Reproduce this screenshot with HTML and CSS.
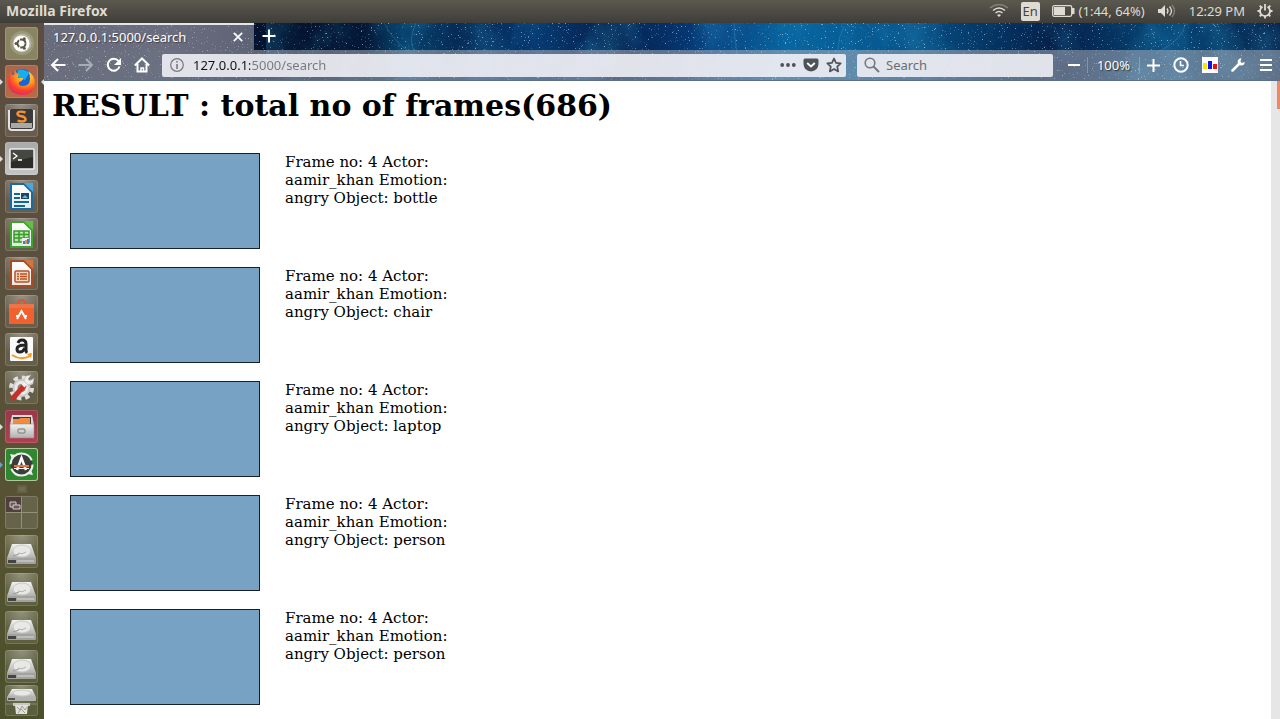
FILE: index.html
```html
<!DOCTYPE html>
<html lang="en">
<head>
<meta charset="utf-8">
<title>127.0.0.1:5000/search</title>
<link rel="stylesheet" href="styles.css">
</head>
<body>
<svg class="defs" aria-hidden="true">
  <defs>
    <linearGradient id="paper" x2="0" y2="1"><stop stop-color="#fff"/><stop offset="1" stop-color="#e4e8e6"/></linearGradient>
    <linearGradient id="metal" x2="0" y2="1"><stop stop-color="#f2f2f0"/><stop offset="1" stop-color="#b0b0ae"/></linearGradient>
    <radialGradient id="flame" cx=".65" cy=".2" r=".9"><stop stop-color="#ffe84a"/><stop offset=".4" stop-color="#ff9a1c"/><stop offset=".7" stop-color="#f8402e"/><stop offset="1" stop-color="#e0207a"/></radialGradient>
    <symbol id="drive" viewBox="0 0 33 33">
      <path d="M7 9h19l5 14H2z" fill="url(#metal)"/>
      <path d="M2 23h29v5q0 1-1 1H3q-1 0-1-1z" fill="#a2a29e"/>
      <path d="M3 25h8v3H3z" fill="#444"/><path d="M12 26h17" stroke="#d8d8d4"/>
      <ellipse cx="17" cy="16" rx="9" ry="6" fill="#e8e8e6" stroke="#c8c8c4"/>
      <path d="M13 18q4 2 8-1" fill="none" stroke="#b4b4b0"/>
      <path d="M8 21l6-2" stroke="#999"/>
    </symbol>
  </defs>
</svg>

<header class="panel">
  <span class="panel-title">Mozilla Firefox</span>
  <div class="indicators">
    <svg class="wifi" width="20" height="14" viewBox="0 0 20 14" fill="none" stroke="#dfdbd2" stroke-width="1.5"><path d="M1 4q9-7 18 0" stroke="#85827a"/><path d="M4 6.500q6-5 12 0M6.500 9q3.500-3 7 0"/><path d="M8 11l2 2 2-2q-2-1.500-4 0z" fill="#dfdbd2" stroke="none"/></svg>
    <span class="lang">En</span>
    <span class="battery"><svg width="23" height="12" viewBox="0 0 23 12"><rect x=".7" y=".7" width="19" height="10.600" rx="1.500" fill="none" stroke="#dfdbd2" stroke-width="1.300"/><path d="M2 2h11v8H2z" fill="#dfdbd2"/><path d="M20 3h2.500v6H20z" fill="#dfdbd2"/></svg>(1:44, 64%)</span>
    <svg class="sound" width="20" height="14" viewBox="0 0 20 14"><path d="M1 5h3l4-4v12l-4-4H1z" fill="#dfdbd2"/><path d="M10 4.500q2 2.500 0 5M12.500 2.500q4 4.500 0 9" fill="none" stroke="#dfdbd2" stroke-width="1.300"/><path d="M15 1q5 6 0 12" fill="none" stroke="#85827a" stroke-width="1.300"/></svg>
    <time>12:29 PM</time>
    <svg width="16" height="16" viewBox="0 0 16 16" fill="none" stroke="#dfdbd2"><path d="M5.500 3.700a5 5 0 1 0 5 0" stroke-width="1.800"/><path d="M8 1v6.500M.5 8H3M13 8h2.500M2.700 2.700l1.800 1.800M13.300 2.700l-1.800 1.800M2.700 13.300l1.800-1.800M13.300 13.300l-1.800-1.800M8 13v2.500" stroke-width="1.800"/></svg>
  </div>
</header>

<div class="desktop">
  <nav class="launcher" aria-label="Launcher">
    <button class="tile dash" aria-label="Dash"><svg viewBox="0 0 33 33"><circle cx="17" cy="16" r="12" fill="#fff" opacity=".16"/><circle cx="17" cy="16" r="9.500" fill="#fff" opacity=".25"/><circle cx="16.500" cy="16.500" r="8" fill="#fff"/><circle cx="16.500" cy="16.500" r="4" fill="none" stroke="#5c5742" stroke-width="2" stroke-dasharray="7.400 1"/><circle cx="11" cy="16.500" r="1.500" fill="#5c5742"/><circle cx="19.300" cy="11.800" r="1.500" fill="#5c5742"/><circle cx="19.300" cy="21.200" r="1.500" fill="#5c5742"/></svg></button>
    <button class="tile firefox running active" aria-label="Firefox"><svg viewBox="0 0 33 33"><circle cx="17" cy="16" r="12" fill="#1a65d6"/><path d="M13 5q6-2 11 3l-4 7-8-3z" fill="#12b0f0"/><path d="M5 7q1 3 3 3 4-2 6-1-2 2-1 4h5q0 3-4 4-1 4 4 4 7 0 7-7 0-5-2-8 7 4 7 12 0 12-13 12Q3 29 3 17 3 11 5 7z" fill="url(#flame)"/><path d="M10 5q1 3 4 4-4 0-6 3z" fill="#ff7a20"/></svg></button>
    <button class="tile" aria-label="Sublime Text"><svg viewBox="0 0 33 33"><path d="M4 6v17q0 3 3 3h19q3 0 3-3V6" fill="#3c3b38" stroke="#e2e2e0" stroke-width="2"/><path d="M6 5h21v14H6z" fill="#3b3a38"/><path d="M6 19h21v5H6z" fill="#aaa9a5"/><path d="M20.500 8.500q-7-2-8 .8-.5 2.200 4 3t4 3.500q-1 2.700-8 .9" fill="none" stroke="#f39233" stroke-width="2.500"/></svg></button>
    <button class="tile terminal running" aria-label="Terminal"><svg viewBox="0 0 33 33"><rect x="5" y="7" width="24" height="20" rx="1" fill="#2b2c29" stroke="#eee" stroke-width="1.500"/><path d="M6 8h22v7L6 20z" fill="#454742"/><path d="M8 11l4 3-4 3M13 18h4" fill="none" stroke="#fff" stroke-width="1.300"/></svg></button>
    <button class="tile" aria-label="LibreOffice Writer"><svg viewBox="0 0 33 33"><path d="M6 4h13l8 8v17H6z" fill="url(#paper)" stroke="#1c699e" stroke-width="2"/><path d="M19 3h9v9z" fill="#4ca5dc"/><path d="M9 14h6M9 18h6M9 22h15M9 26h11" stroke="#126595" stroke-width="2"/><path d="M16 13h8v6h-8z" fill="#164968"/><path d="M17 18l3-3 3 3z" fill="#6db3d8"/></svg></button>
    <button class="tile" aria-label="LibreOffice Calc"><svg viewBox="0 0 33 33"><path d="M6 4h13l8 8v17H6z" fill="url(#paper)" stroke="#3aa528" stroke-width="2"/><path d="M19 3h9v9z" fill="#65bd4c"/><path d="M9 13h15v11H9z" fill="#b9e3ad" stroke="#379b28" stroke-width="1.500"/><path d="M9 16.500h15M9 20h15M14 13v11M19 13v11" stroke="#379b28" stroke-width="1.500"/><path d="M17 20h7v7h-7z" fill="#e9eef0"/><path d="M18 26v-3h2v3zM22 26v-5h2v5z" fill="#2a87c5"/><path d="M20 26v-4h2v4z" fill="#ed8b43"/></svg></button>
    <button class="tile" aria-label="LibreOffice Impress"><svg viewBox="0 0 33 33"><path d="M6 4h13l8 8v17H6z" fill="url(#paper)" stroke="#a84b22" stroke-width="2"/><path d="M19 3h9v9z" fill="#d17642"/><rect x="10" y="14" width="14" height="11" rx="1" fill="#f4d3be" stroke="#b75325" stroke-width="1.500"/><path d="M15 17h7M15 19.500h7M15 22h7M12 17h2M12 19.500h2M12 22h2" stroke="#b75325" stroke-width="1.300"/></svg></button>
    <button class="tile" aria-label="Ubuntu Software"><svg viewBox="0 0 33 33"><path d="M13 10V8q0-3 3.500-3T20 8v2" fill="none" stroke="#d35a34" stroke-width="2"/><path d="M4 9h25v5H4z" fill="#e8764a"/><path d="M4 13h25v16H4z" fill="#f1602d"/><path d="M12 24l4.500-8L21 24M11 21h3m5 0h3" fill="none" stroke="#fff" stroke-width="2"/></svg></button>
    <button class="tile" aria-label="Amazon"><svg viewBox="0 0 33 33"><rect x="5" y="4" width="23" height="24" rx="1" fill="#fafafa"/><path d="M13 10q1-3 4-3 4 0 4 4v6q0 2 1 3M20 12q-8 0-8 4 0 3 3 3t5-4" fill="none" stroke="#232323" stroke-width="3"/><path d="M7 22q9 6 18 1" fill="none" stroke="#f49a20" stroke-width="2"/><path d="M22 21l5-1-1 5z" fill="#f49a20"/></svg></button>
    <button class="tile" aria-label="System Settings"><svg viewBox="0 0 33 33"><circle cx="16.500" cy="17" r="10.500" fill="none" stroke="#dededc" stroke-width="4" stroke-dasharray="4.400 3.850"/><circle cx="16.500" cy="17" r="8" fill="#e9e9e7" stroke="#ccc" stroke-width="2"/><circle cx="16.500" cy="17" r="4" fill="#8c8875"/><path d="M8 27l11-12" stroke="#c92e2b" stroke-width="5" stroke-linecap="round"/><path d="M18 15l4-4" stroke="#eee" stroke-width="4"/><path d="M21 5l-2 5 4 4 5-2 1-5-4 3-2-2 3-4z" fill="#eee" stroke="#aaa" stroke-width=".5"/></svg></button>
    <button class="tile files running" aria-label="Files"><svg viewBox="0 0 33 33"><path d="M7 5h20l2 10H5z" fill="#dcdbd8"/><path d="M8 7h18v7H8z" fill="#3d3b36"/><path d="M8 9h6l1-1h10v6H8z" fill="#f18b42"/><path d="M5 14h24v14H5z" fill="url(#metal)" stroke="#8d8d8a" stroke-width=".6"/><rect x="13" y="19" width="7" height="4" rx="1" fill="#d2d2d0" stroke="#777"/></svg></button>
    <button class="tile updater waiting" aria-label="Software Updater"><svg viewBox="0 0 33 33"><circle cx="16.500" cy="16.500" r="11" fill="#3b3d3a" stroke="#eee" stroke-width="2" stroke-dasharray="30 4.550"/><path d="M5 6l6 1-4 4zM28 27l-6-1 4-4z" fill="#eee"/><path d="M12 22l4.500-12L21 22" fill="none" stroke="#fff" stroke-width="2.500"/><path d="M9 18h15" stroke="#ef7440" stroke-width="2"/><path d="M9 20.500h15" stroke="#fff"/></svg></button>
    <div class="marker"></div>
    <button class="tile workspace" aria-label="Workspace Switcher"><svg viewBox="0 0 33 33"><path d="M1 1h15v15H1z" fill="#503f3c"/><path d="M16.500 1v31M1 16.500h31" stroke="#94917d"/><path d="M5 6h6v5H5z" fill="#695854" stroke="#d3cecb"/><path d="M8 9h7v4H8z" fill="#695854" stroke="#d3cecb"/></svg></button>
    <button class="tile" aria-label="Drive 1"><svg><use href="#drive"/></svg></button>
    <button class="tile" aria-label="Drive 2"><svg><use href="#drive"/></svg></button>
    <button class="tile" aria-label="Drive 3"><svg><use href="#drive"/></svg></button>
    <button class="tile" aria-label="Drive 4"><svg><use href="#drive"/></svg></button>
    <button class="tile stack" aria-label="Drive 5 and Trash"><svg viewBox="0 0 33 31"><path d="M1 19h31" stroke="#8a8b70"/><path d="M7 4h20l4 8H2z" fill="url(#metal)"/><path d="M2 12h29v3q0 1-1 1H3q-1 0-1-1z" fill="#b2b2ae"/><path d="M3 13h7v2H3z" fill="#555"/><ellipse cx="17" cy="8" rx="9" ry="3" fill="#e8e8e6" stroke="#c8c8c4"/><path d="M8 18h17v3H8z" fill="#c8c8c4"/><path d="M10 20h13l-1 9H11z" fill="#e1e1dc"/><path d="M12 22l3 3 2-4 3 4 2-3M13 28l3-4 4 4" fill="none" stroke="#9d9d94"/></svg></button>
  </nav>

  <main class="window">
    <div class="chrome">
      <svg class="sky" aria-hidden="true">
        <defs>
          <linearGradient id="night">
            <stop stop-color="#1a2238"/><stop offset=".1" stop-color="#1f2a44"/><stop offset=".17" stop-color="#04132f"/><stop offset=".26" stop-color="#041736"/><stop offset=".29" stop-color="#08456f"/><stop offset=".34" stop-color="#042752"/><stop offset=".4" stop-color="#063a72"/><stop offset=".46" stop-color="#041f4b"/><stop offset=".54" stop-color="#063e7d"/><stop offset=".6" stop-color="#0866a0"/><stop offset=".68" stop-color="#075890"/><stop offset=".76" stop-color="#053867"/><stop offset=".82" stop-color="#041f48"/><stop offset=".91" stop-color="#064879"/><stop offset="1" stop-color="#041d45"/>
          </linearGradient>
          <filter id="stars" x="0" y="0" width="100%" height="100%"><feTurbulence type="fractalNoise" baseFrequency=".7" numOctaves="2" seed="8"/><feColorMatrix values="0 0 0 0 .72  0 0 0 0 .86  0 0 0 0 1  6 5 0 0 -6.900"/></filter>
          <filter id="clouds" x="0" y="0" width="100%" height="100%"><feTurbulence type="fractalNoise" baseFrequency=".02 .012" numOctaves="4" seed="3"/><feColorMatrix values="0 0 0 0 .03  0 0 0 0 .38  0 0 0 0 .68  3 0 0 0 -1.300"/></filter>
        </defs>
        <rect width="100%" height="100%" fill="url(#night)"/>
        <rect x="18%" width="82%" height="100%" filter="url(#clouds)" opacity=".25"/>
        <rect width="100%" height="100%" filter="url(#stars)" opacity=".55"/>
        <g fill="none" stroke="#64b5e0" opacity=".25"><path d="M340 0q8 16 24 28M372 0q-8 16-2 28M690 0q0 18 8 58M1142 0q-4 18-30 30M800 4q-12 20 0 50"/></g>
      </svg>
      <div class="tabs">
        <div class="tab"><span>127.0.0.1:5000/search</span><button aria-label="Close tab"><svg width="10" height="10" viewBox="0 0 10 10" stroke="#fff" stroke-width="1.700"><path d="M.8.8l8.400 8.400M9.200.8L.8 9.200"/></svg></button></div>
        <button class="newtab" aria-label="New tab"><svg width="14" height="14" viewBox="0 0 14 14" stroke="#fff" stroke-width="2"><path d="M7 .5v13M.5 7h13"/></svg></button>
      </div>
      <div class="toolbar">
        <div class="navs">
          <button aria-label="Back"><svg width="16" height="16" viewBox="0 0 16 16" fill="none" stroke="#fff" stroke-width="2"><path d="M15.500 8H2M8 2L2 8l6 6"/></svg></button>
          <button aria-label="Forward" disabled><svg width="16" height="16" viewBox="0 0 16 16" fill="none" stroke="#a9adb8" stroke-width="2"><path d="M.5 8H14M8 2l6 6-6 6"/></svg></button>
          <button aria-label="Reload"><svg width="16" height="16" viewBox="0 0 16 16" fill="none" stroke="#fff" stroke-width="2"><path d="M13.500 9.500A6 6 0 1 1 12.500 4"/><path d="M15 1v7H8z" fill="#fff" stroke="none"/></svg></button>
          <button aria-label="Home"><svg width="16" height="16" viewBox="0 0 16 16" fill="none" stroke="#fff" stroke-width="2"><path d="M.8 8.500L8 1.500l7.200 7M3.500 7v7.500h9V7"/><path d="M7 15v-4h2.500v4" stroke-width="1.500"/></svg></button>
        </div>
        <div class="field address">
          <svg width="14" height="14" viewBox="0 0 14 14" fill="none" stroke="#77787c"><circle cx="7" cy="7" r="6.300" stroke-width="1.200"/><path d="M7 3v1.600M7 6v5" stroke-width="1.600"/></svg>
          <input class="url" aria-label="Address" value="127.0.0.1:5000/search">
          <button aria-label="Page actions"><svg width="16" height="4" viewBox="0 0 16 4" fill="#505257"><circle cx="2.200" cy="2" r="1.900"/><circle cx="8" cy="2" r="1.900"/><circle cx="13.800" cy="2" r="1.900"/></svg></button>
          <button aria-label="Save to Pocket"><svg width="16" height="14" viewBox="0 0 16 14"><path d="M2 .5h12q1.500 0 1.500 1.500v4Q15 13 8 13.500 1 13 .5 6V2Q.5.500 2 .5z" fill="#505257"/><path d="M4.200 5L8 8.500 11.800 5" fill="none" stroke="#fff" stroke-width="1.800"/></svg></button>
          <button aria-label="Bookmark"><svg width="16" height="16" viewBox="0 0 16 16"><path d="M8 1.500l2 4.400 4.700.5-3.500 3.200 1 4.800L8 12l-4.200 2.400 1-4.800L1.300 6.400 6 5.900z" fill="none" stroke="#505257" stroke-width="1.700" stroke-linejoin="round"/></svg></button>
        </div>
        <div class="field find">
          <svg width="16" height="16" viewBox="0 0 16 16" fill="none" stroke="#77787c"><circle cx="6" cy="6" r="4.800" stroke-width="1.600"/><path d="M9.500 9.500L15 15" stroke-width="2"/></svg>
          <input type="search" aria-label="Search" placeholder="Search">
        </div>
        <div class="tools">
          <button aria-label="Zoom out"><svg width="12" height="12" viewBox="0 0 12 12" stroke="#fff" stroke-width="2"><path d="M0 6h12"/></svg></button>
          <button class="zoom">100%</button>
          <button aria-label="Zoom in"><svg width="13" height="13" viewBox="0 0 13 13" stroke="#fff" stroke-width="2"><path d="M0 6.500h13M6.500 0v13"/></svg></button>
          <button aria-label="History"><svg width="16" height="16" viewBox="0 0 16 16" fill="none" stroke="#fff" stroke-width="2"><circle cx="8" cy="8" r="6.700"/><path d="M7.500 4v4.500H11" stroke-width="1.600"/></svg></button>
          <button aria-label="Statistics"><svg width="16" height="16" viewBox="0 0 16 16"><path d="M0 0h16v16H0z" fill="#fff"/><path d="M1 6h4v6H1z" fill="#ffe600"/><path d="M6 4h4v8H6z" fill="#1010f0"/><path d="M11 7h4v5h-4z" fill="#f01010"/></svg></button>
          <button aria-label="Developer tools"><svg width="14" height="14" viewBox="0 0 14 14"><path d="M1.500 12.500L8 6" stroke="#fff" stroke-width="2.500" stroke-linecap="round"/><path d="M10.500.3Q7 .5 6.600 3.500q0 4 4 4 3-.2 3.200-3.700l-2.600 1.400-1.800-1.800z" fill="#fff"/></svg></button>
          <button aria-label="Menu"><svg width="14" height="12" viewBox="0 0 14 12" stroke="#fff" stroke-width="2"><path d="M2 1h12M2 6h12M2 11h12"/></svg></button>
        </div>
      </div>
    </div>
    <div class="view">
      <div class="page">
        <h1>RESULT : total no of frames(686)</h1>
        <div class="results">
          <div class="result"><div class="frame"></div><p>Frame no: 4 Actor: aamir_khan Emotion: angry Object: bottle</p></div>
          <div class="result"><div class="frame"></div><p>Frame no: 4 Actor: aamir_khan Emotion: angry Object: chair</p></div>
          <div class="result"><div class="frame"></div><p>Frame no: 4 Actor: aamir_khan Emotion: angry Object: laptop</p></div>
          <div class="result"><div class="frame"></div><p>Frame no: 4 Actor: aamir_khan Emotion: angry Object: person</p></div>
          <div class="result"><div class="frame"></div><p>Frame no: 4 Actor: aamir_khan Emotion: angry Object: person</p></div>
        </div>
      </div>
      <div class="scrollbar"><div class="thumb"></div></div>
    </div>
  </main>
</div>
</body>
</html>
```
FILE: styles.css
```css
* { box-sizing: border-box; }
html, body { height: 100%; }
body {
  margin: 0;
  display: flex;
  flex-direction: column;
  overflow: hidden;
  background: #fff;
  font: 13px/16px "Noto Sans", "Open Sans", sans-serif;
}
button { border: 0; padding: 0; background: none; font: inherit; color: inherit; display: flex; align-items: center; justify-content: center; }
input { border: 0; padding: 0; background: none; font: inherit; min-width: 0; outline: 0; }
svg { display: block; flex: none; }
.defs { position: absolute; width: 0; height: 0; }

.panel {
  flex: none;
  height: 23px;
  padding: 0 7px 1px 6px;
  display: flex;
  align-items: center;
  justify-content: space-between;
  background: linear-gradient(#5b594f, #3e3d39);
  color: #dfdbd2;
}
.panel-title { font-size: 14px; font-weight: 700; }
.indicators { display: flex; align-items: center; gap: 12px; }
.lang {
  width: 19px;
  height: 19px;
  border-radius: 2px;
  background: #dfdbd2;
  color: #45443f;
  line-height: 19px;
  text-align: center;
}
.battery { display: flex; align-items: center; gap: 4px; }

.desktop { flex: 1; min-height: 0; display: flex; }
.launcher {
  flex: none;
  width: 44px;
  padding: 4px 6px 3px 5px;
  display: flex;
  flex-direction: column;
  justify-content: space-between;
  background: linear-gradient(#5b4d40, #5a503d 40%, #555331 75%, #4b502b);
}
.tile {
  position: relative;
  width: 33px;
  height: 33px;
  flex: none;
  border-radius: 3px;
  background: radial-gradient(circle at 50% 0, #ffffff60, #ffffff14 65%);
  box-shadow: inset 0 0 0 1px #ffffff26;
}
.tile svg { width: 33px; height: 33px; }
.dash { background: #898562; }
.firefox { background: linear-gradient(#ad6549, #b86b45); }
.terminal { background: linear-gradient(#a8a8a8, #c4c4c4); }
.files { background: linear-gradient(#98374a, #b23e50); }
.updater { background: #2f8730; box-shadow: inset 0 0 0 1px #b2c699; }
.workspace { background: #65644a; }
.stack { margin-top: -3px; }
.stack, .stack svg { height: 31px; }
.running::before, .waiting::before {
  content: "";
  position: absolute;
  left: -5px;
  top: 14px;
  border: 3px solid transparent;
  border-left-color: #ddd;
  border-right: 0;
}
.waiting::before { border-left-color: #5fa5b4; }
.active::after {
  content: "";
  position: absolute;
  right: -6px;
  top: 14px;
  border: 3px solid transparent;
  border-right-color: #ddd;
  border-left: 0;
}
.marker { flex: none; width: 10px; height: 8px; margin: -1px auto -2px; background: #6e6c50; border: 2px solid #626145; }

.window { flex: 1; min-width: 0; display: flex; flex-direction: column; }
.chrome { position: relative; flex: none; color: #fff; border-bottom: 1px solid #5b6f8c; }
.sky { position: absolute; inset: 0; width: 100%; height: 100%; }
.tabs, .toolbar { position: relative; display: flex; align-items: center; }
.tabs { height: 27px; }
.tab {
  width: 210px;
  height: 27px;
  padding: 0 11px 2px 9px;
  display: flex;
  align-items: center;
  justify-content: space-between;
  border-top: 2px solid #e4e5e8;
  background: #b8b2bc80;
  text-shadow: 1px 1px 1px #333b;
}
.newtab { width: 30px; height: 27px; padding-bottom: 2px; }
.toolbar { height: 30px; padding: 0 8px 0 6px; gap: 11px; background: #b8b8c080; }
.navs { display: flex; gap: 12px; }
.toolbar .navs { margin-right: 1px; }
.field {
  height: 23px;
  display: flex;
  align-items: center;
  border-radius: 2px;
  background: #f0f1f6e4;
  color: #77787c;
}
.address { flex: 1; min-width: 0; padding: 0 4px 0 8px; gap: 7px; }
.address input { flex: 1; margin-left: 2px; }
.url {
  color: #77787c;
  background: linear-gradient(90deg, #111 57px, #77787c 57px) text;
  -webkit-text-fill-color: transparent;
}
.find { width: 196px; padding: 0 7px; gap: 6px; }
.find input { flex: 1; }
.find input::placeholder { color: #6b6d73; opacity: 1; }
.tools { display: flex; align-items: center; gap: 13px; margin-left: 4px; }
.zoom {
  width: 53px;
  height: 16px;
  margin: 0 -6px;
  border: 1px solid #ffffff40;
  border-width: 0 1px;
  text-shadow: 1px 1px 1px #333;
}

.view { flex: 1; min-height: 0; display: flex; background: #fff; color: #000; }
.page { flex: 1; padding: 6px 8px; font: 15px/18px "DejaVu Serif", serif; }
h1 { margin: 0; font-size: 30px; line-height: 38px; }
.results { display: grid; gap: 18px; padding: 28px 18px; }
.result { display: flex; gap: 25px; height: 96px; }
.frame { width: 190px; flex: none; border: 1px solid #15202a; background: #77a2c4; }
.result p { margin: 0; width: 180px; }
.scrollbar { width: 9px; background: #e6e6e6; display: flex; justify-content: flex-end; }
.thumb { width: 3px; height: 28px; background: #f08763; }
```
